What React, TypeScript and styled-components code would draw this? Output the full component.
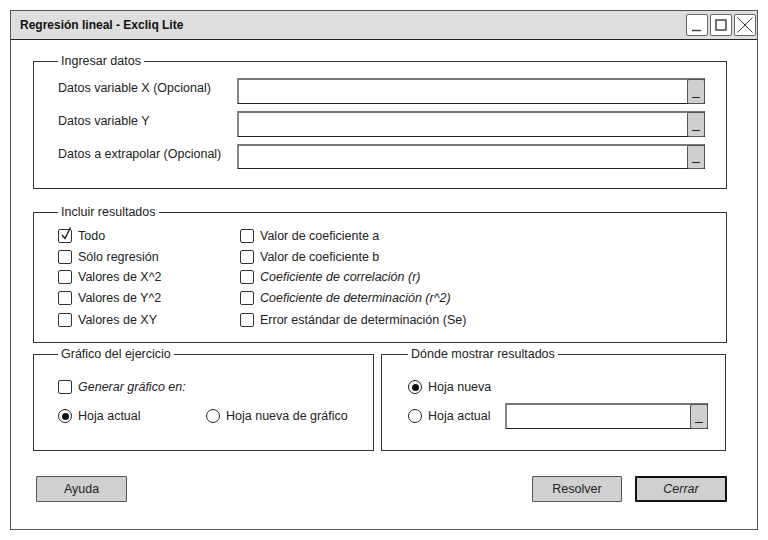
import React from "react";
import styled, { createGlobalStyle } from "styled-components";

const Global = createGlobalStyle`
  html, body { margin: 0; padding: 0; background: #fff; }
  body { font-family: "Liberation Sans", Arial, sans-serif; color: #222; }
  * { box-sizing: border-box; }
`;

const Window = styled.div`
  margin: 10px 0 0 10px;
  width: 748px;
  height: 520px;
  border: 1px solid #555;
  display: flex;
  flex-direction: column;
`;

const TitleBar = styled.div`
  height: 29px;
  background: #dedede;
  border-bottom: 1px solid #222;
  display: flex;
  align-items: center;
  justify-content: space-between;
  padding: 0 1px 0 9px;
`;

const Title = styled.div`
  font-size: 12px;
  font-weight: bold;
  color: #111;
`;

const Controls = styled.div`
  display: flex;
  gap: 2px;
`;

const CtrlBox = styled.div`
  width: 22px;
  height: 22px;
  border: 1.5px solid #666;
  border-radius: 2px;
  background: #fff;
  display: flex;
  align-items: center;
  justify-content: center;
`;

const Body = styled.div`
  flex: 1;
  display: flex;
  flex-direction: column;
  padding: 14px 30px 0 22px;
`;

const Group = styled.fieldset<{ $h?: number; $pl?: number }>`
  margin: 0;
  min-width: 0;
  border: 1px solid #333;
  padding: 0 21px 0 ${(p) => p.$pl ?? 24}px;
  ${(p) => (p.$h ? `height: ${p.$h}px;` : "")}
`;

const ResultsGroup = styled(Group)`
  margin-top: 16px;
`;

const Legend = styled.legend`
  padding: 0 3px;
  font-size: 12.5px;
  line-height: 14px;
  color: #222;
`;

const DataGrid = styled.div`
  display: grid;
  grid-template-columns: 179px 1fr;
  grid-template-rows: 26px 26px 25px;
  row-gap: 7px;
  padding: 10px 0 19px;
  align-items: center;
`;

const Label = styled.span<{ $italic?: boolean }>`
  font-size: 12.5px;
  font-style: ${(p) => (p.$italic ? "italic" : "normal")};
  color: #222;
  white-space: nowrap;
`;

const FieldLabel = styled(Label)`
  padding-bottom: 6px;
`;

const Input = styled.div<{ $w?: number }>`
  height: 100%;
  ${(p) => (p.$w ? `width: ${p.$w}px; height: 26px;` : "")}
  border-top: 2px solid #777;
  border-left: 2px solid #888;
  border-right: 1px solid #222;
  border-bottom: 1px solid #222;
  background: #fff;
  display: flex;
  justify-content: flex-end;
  align-items: stretch;
`;

const PickBtn = styled.div`
  width: 18px;
  margin: -1px -1px -1px 0;
  background: #cfcfcf;
  border: 1.5px solid #555;
  border-radius: 2px;
  position: relative;
  &::after {
    content: "";
    position: absolute;
    left: 4px;
    right: 4px;
    bottom: 5px;
    height: 1.5px;
    background: #222;
  }
`;

const ChecksGrid = styled.div`
  display: grid;
  grid-template-columns: 182px auto;
  grid-template-rows: 21px 21px 20px 21px 23px;
  grid-auto-flow: column;
  padding: 6px 0 11px;
`;

const Option = styled.label`
  display: flex;
  align-items: center;
  gap: 6px;
`;

const Box = styled.span`
  width: 14px;
  height: 14px;
  flex: none;
  border: 1px solid #333;
  border-radius: 2px;
  background: #fff;
  position: relative;
`;

const Radio = styled.span<{ $on?: boolean }>`
  width: 14px;
  height: 14px;
  flex: none;
  border: 1px solid #222;
  border-radius: 50%;
  background: #fff;
  display: flex;
  align-items: center;
  justify-content: center;
  &::after {
    content: "";
    width: 7px;
    height: 7px;
    border-radius: 50%;
    background: ${(p) => (p.$on ? "#111" : "transparent")};
  }
`;

const Bottom = styled.div`
  display: grid;
  grid-template-columns: 341px 345px;
  column-gap: 7px;
  margin-top: 4px;
`;

const GroupRows = styled.div<{ $gap: number }>`
  display: flex;
  flex-direction: column;
  gap: ${(p) => p.$gap}px;
  padding-top: 16px;
`;

const Row = styled.div<{ $col?: number }>`
  display: grid;
  grid-template-columns: ${(p) => (p.$col ? `${p.$col}px auto` : "auto")};
  align-items: center;
  min-height: 20px;
`;

const Footer = styled.div`
  display: flex;
  align-items: center;
  margin-top: 25px;
  padding-left: 3px;
`;

const Btn = styled.div<{ $w: number; $primary?: boolean }>`
  width: ${(p) => p.$w}px;
  height: 26px;
  background: #d0d0d0;
  border: ${(p) => (p.$primary ? "2px solid #111" : "1px solid #555")};
  border-radius: 1px;
  display: flex;
  align-items: center;
  justify-content: center;
  font-size: 12.5px;
  font-style: ${(p) => (p.$primary ? "italic" : "normal")};
  color: #222;
`;

const Spacer = styled.div`
  flex: 1;
`;

const BtnGap = styled.div`
  width: 13px;
`;

const CheckMark = () => (
  <svg width="14" height="14" viewBox="0 0 14 14" style={{ position: "absolute", left: 0, top: -3 }}>
    <path d="M3 8 L6 11.5 L11.5 0.5" fill="none" stroke="#222" strokeWidth="1.4" />
  </svg>
);

const Check = ({ on, label, italic }: { on?: boolean; label: string; italic?: boolean }) => (
  <Option>
    <Box>{on && <CheckMark />}</Box>
    <Label $italic={italic}>{label}</Label>
  </Option>
);

const Rad = ({ on, label }: { on?: boolean; label: string }) => (
  <Option>
    <Radio $on={on} />
    <Label>{label}</Label>
  </Option>
);

export default function App() {
  return (
    <>
      <Global />
      <Window>
        <TitleBar>
          <Title>Regresión lineal - Excliq Lite</Title>
          <Controls>
            <CtrlBox>
              <svg width="18" height="18" viewBox="0 0 18 18">
                <path d="M4 14.5 H13" stroke="#444" strokeWidth="1.5" />
              </svg>
            </CtrlBox>
            <CtrlBox>
              <svg width="18" height="18" viewBox="0 0 18 18">
                <rect x="4" y="4" width="10" height="10" fill="none" stroke="#444" strokeWidth="1.5" />
              </svg>
            </CtrlBox>
            <CtrlBox>
              <svg width="18" height="18" viewBox="0 0 18 18">
                <path d="M1.5 1.5 L16.5 16.5 M16.5 1.5 L1.5 16.5" stroke="#333" strokeWidth="1" />
              </svg>
            </CtrlBox>
          </Controls>
        </TitleBar>
        <Body>
          <Group>
            <Legend>Ingresar datos</Legend>
            <DataGrid>
              <FieldLabel>Datos variable X (Opcional)</FieldLabel>
              <Input>
                <PickBtn />
              </Input>
              <FieldLabel>Datos variable Y</FieldLabel>
              <Input>
                <PickBtn />
              </Input>
              <FieldLabel>Datos a extrapolar (Opcional)</FieldLabel>
              <Input>
                <PickBtn />
              </Input>
            </DataGrid>
          </Group>
          <ResultsGroup>
            <Legend>Incluir resultados</Legend>
            <ChecksGrid>
              <Check on label="Todo" />
              <Check label="Sólo regresión" />
              <Check label="Valores de X^2" />
              <Check label="Valores de Y^2" />
              <Check label="Valores de XY" />
              <Check label="Valor de coeficiente a" />
              <Check label="Valor de coeficiente b" />
              <Check italic label="Coeficiente de correlación (r)" />
              <Check italic label="Coeficiente de determinación (r^2)" />
              <Check label="Error estándar de determinación (Se)" />
            </ChecksGrid>
          </ResultsGroup>
          <Bottom>
            <Group $h={104}>
              <Legend>Gráfico del ejercicio</Legend>
              <GroupRows $gap={9}>
                <Row>
                  <Check italic label="Generar gráfico en:" />
                </Row>
                <Row $col={148}>
                  <Rad on label="Hoja actual" />
                  <Rad label="Hoja nueva de gráfico" />
                </Row>
              </GroupRows>
            </Group>
            <Group $h={104} $pl={26}>
              <Legend>Dónde mostrar resultados</Legend>
              <GroupRows $gap={6}>
                <Row>
                  <Rad on label="Hoja nueva" />
                </Row>
                <Row $col={97}>
                  <Rad label="Hoja actual" />
                  <Input $w={203}>
                    <PickBtn />
                  </Input>
                </Row>
              </GroupRows>
            </Group>
          </Bottom>
          <Footer>
            <Btn $w={91}>Ayuda</Btn>
            <Spacer />
            <Btn $w={90}>Resolver</Btn>
            <BtnGap />
            <Btn $w={92} $primary>
              Cerrar
            </Btn>
          </Footer>
        </Body>
      </Window>
    </>
  );
}
